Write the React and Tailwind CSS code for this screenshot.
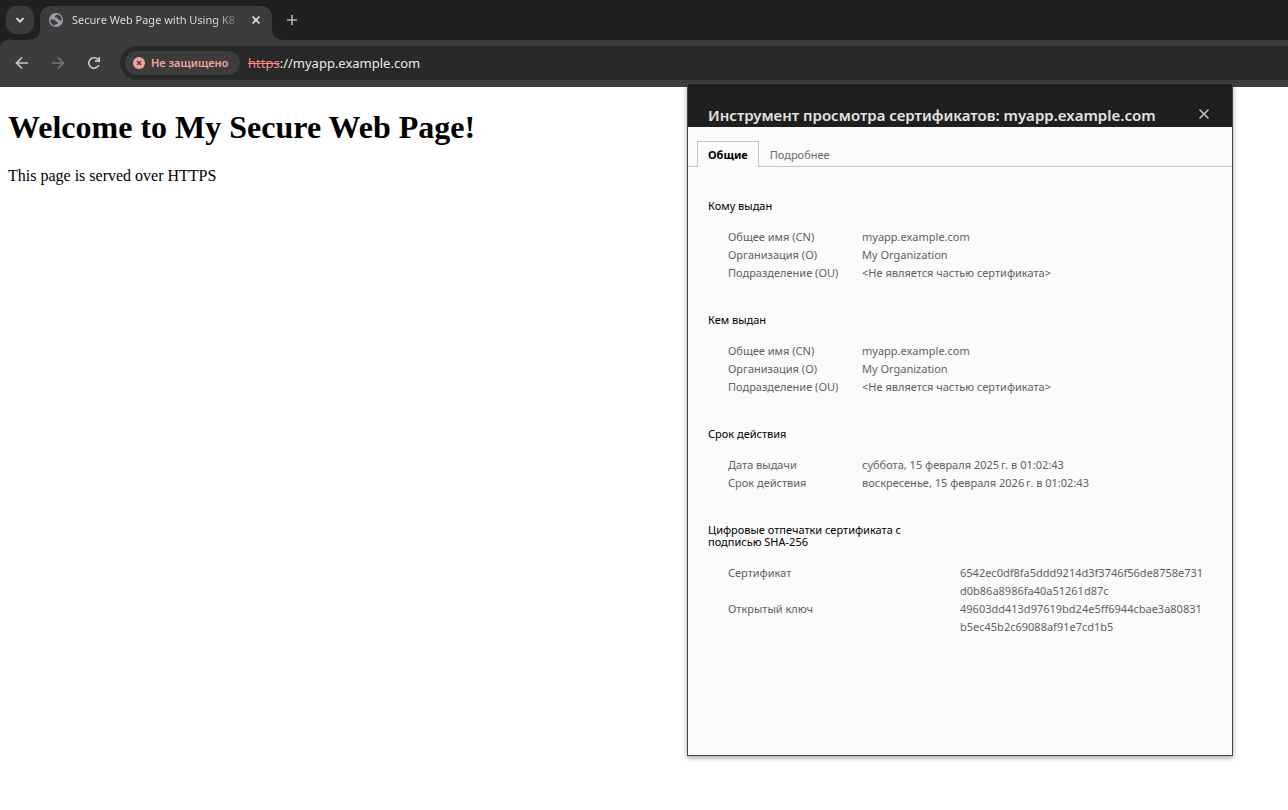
import { useState } from "react";

const NOT_PART = "<Не является частью сертификата>";

const subject = [
  ["Общее имя (CN)", "myapp.example.com"],
  ["Организация (O)", "My Organization"],
  ["Подразделение (OU)", NOT_PART],
];

const validity = [
  ["Дата выдачи", "суббота, 15 февраля 2025\u202fг. в 01:02:43"],
  ["Срок действия", "воскресенье, 15 февраля 2026\u202fг. в 01:02:43"],
];

const fingerprints = [
  ["Сертификат", "6542ec0df8fa5ddd9214d3f3746f56de8758e731", "d0b86a8986fa40a51261d87c"],
  ["Открытый ключ", "49603dd413d97619bd24e5ff6944cbae3a80831", "b5ec45b2c69088af91e7cd1b5"],
];

function Globe() {
  return (
    <svg className="size-4 shrink-0" viewBox="0 0 16 16" aria-hidden="true">
      <circle cx="8" cy="8" r="7" fill="#9aa0a8" />
      <path
        d="M9.6 2.6 7.6 3.2 6.6 4.4 7.2 5.4 9.2 5.6 9.4 7 11 7.4 11.6 8.6 13.6 8.4A5.700 5.700 0 0 0 9.600 2.600Z"
        fill="#3c3c3c"
      />
      <path
        d="M2.3 7.400 5.800 7.400 7.600 8.400 7.800 9.600 9.800 10.200 9.400 11.800 7.400 12.400 7 13.600A5.700 5.700 0 0 1 2.300 7.400Z"
        fill="#3c3c3c"
      />
    </svg>
  );
}

function TabStrip() {
  return (
    <div className="flex h-10 items-end bg-[#1f2020] pl-1.5">
      <button
        type="button"
        aria-label="Поиск вкладок"
        className="mb-1.5 flex size-7 items-center justify-center rounded-[10px] bg-[#3c3c3c] text-[#e3e3e3]"
      >
        <svg className="size-4" viewBox="0 0 16 16" fill="none" stroke="currentColor" strokeWidth="1.8" aria-hidden="true">
          <path d="M4.5 6.2 8 9.7 11.5 6.2" />
        </svg>
      </button>
      <svg className="-ml-1 h-2.5 w-2.5" viewBox="0 0 10 10" aria-hidden="true">
        <path d="M10 0V10H0A10 10 0 0 0 10 0Z" fill="#3c3c3c" />
      </svg>
      <div className="flex h-[34px] w-58 items-center rounded-t-[10px] bg-[#3c3c3c] px-2 pb-1.5">
        <Globe />
        <span className="ml-2 min-w-0 flex-1 bg-linear-to-r from-[#e3e3e3] from-85% to-[#555555] bg-clip-text text-[11px] leading-4 whitespace-nowrap text-transparent">
          Secure Web Page with Using K8
        </span>
        <button type="button" aria-label="Закрыть вкладку" className="ml-2 flex size-4 items-center justify-center text-[#e3e3e3]">
          <svg className="size-4" viewBox="0 0 16 16" stroke="currentColor" strokeWidth="1.6" aria-hidden="true">
            <path d="M4.5 4.5 11.5 11.5M11.5 4.5 4.5 11.5" />
          </svg>
        </button>
      </div>
      <svg className="h-2.5 w-2.5" viewBox="0 0 10 10" aria-hidden="true">
        <path d="M0 0V10H10A10 10 0 0 1 0 0Z" fill="#3c3c3c" />
      </svg>
      <button type="button" aria-label="Новая вкладка" className="mb-3 ml-0.5 flex size-4 items-center justify-center text-[#b4b4b4]">
        <svg className="size-4" viewBox="0 0 16 16" stroke="currentColor" strokeWidth="1.6" aria-hidden="true">
          <path d="M8 3V13M3 8H13" />
        </svg>
      </button>
    </div>
  );
}

function Toolbar() {
  return (
    <div className="bg-[#1f2020]">
      <div className="flex h-[47px] items-center rounded-tl-[8px] bg-[#3c3c3c] pb-px pl-3.5">
        <button type="button" aria-label="Назад" className="text-[#c7c7c7]">
          <svg className="size-4" viewBox="0 0 16 16" fill="none" stroke="currentColor" strokeWidth="1.7" aria-hidden="true">
            <path d="M14 8H3M8 2.5 2.5 8 8 13.5" />
          </svg>
        </button>
        <button type="button" aria-label="Вперёд" className="ml-5 text-[#757575]">
          <svg className="size-4" viewBox="0 0 16 16" fill="none" stroke="currentColor" strokeWidth="1.7" aria-hidden="true">
            <path d="M2 8H13M8 2.5 13.5 8 8 13.5" />
          </svg>
        </button>
        <button type="button" aria-label="Обновить" className="ml-5 text-[#c7c7c7]">
          <svg className="size-4" viewBox="0 0 16 16" fill="none" stroke="currentColor" strokeWidth="1.7" aria-hidden="true">
            <path d="M12.8 10A5.2 5.2 0 1 1 11.8 4.4L13 5.6" />
            <path d="M13.2 2V6.2H9" />
          </svg>
        </button>
        <div className="ml-[18px] flex h-[34px] flex-1 items-center rounded-l-full bg-[#282828] pl-[5px]">
          <button
            type="button"
            className="flex h-6 w-[115px] shrink-0 items-center gap-1.5 rounded-full bg-[#3c3c3c] pl-2 text-[11px] leading-4 font-semibold whitespace-nowrap text-[#f2a49c]"
          >
            <svg className="size-3 shrink-0" viewBox="0 0 12 12" aria-hidden="true">
              <circle cx="6" cy="6" r="6" fill="#f2a49c" />
              <path d="M4 4 8 8M8 4 4 8" stroke="#3c3c3c" strokeWidth="1.4" />
            </svg>
            Не защищено
          </button>
          <label htmlFor="address" className="ml-2 text-[13px] leading-5 text-[#f28b82] line-through">
            https
          </label>
          <input
            id="address"
            defaultValue="://myapp.example.com"
            aria-label="Адрес"
            className="min-w-0 flex-1 bg-transparent text-[13px] leading-5 text-[#e8e8e8] outline-none"
          />
        </div>
      </div>
    </div>
  );
}

function Section({ title, rows, wide }) {
  return (
    <section>
      <h3 className="w-54 text-[11px] leading-3 text-black">{title}</h3>
      <dl className="mt-4 ml-5 text-[11px] leading-[18px] text-[#5f5f5f]">
        {rows.map(([name, ...lines]) => (
          <div key={name} className="flex">
            <dt className={wide ? "w-58 shrink-0" : "w-[134px] shrink-0"}>{name}</dt>
            <dd className="whitespace-nowrap">
              {lines.map((line) => (
                <div key={line}>{line}</div>
              ))}
            </dd>
          </div>
        ))}
      </dl>
    </section>
  );
}

function CertificateDialog() {
  const [tab, setTab] = useState("general");
  const active = "-mb-px border border-b-0 border-[#c4c4c4] bg-[#fbfbfb] font-bold text-black";
  const idle = "-mb-px border border-b-0 border-transparent text-[#6a6a6a]";
  return (
    <div
      role="dialog"
      aria-labelledby="certificate-title"
      className="absolute top-[83px] right-[55px] w-[546px] border border-[#444444] bg-[#fbfbfb] shadow-[0_2px_5px_rgba(0,0,0,0.35)]"
    >
      <header className="flex h-[43px] items-end justify-between bg-[#1f1f1f] px-5 pb-px">
        <h2 id="certificate-title" className="text-[15px] leading-[22px] font-semibold whitespace-nowrap text-[#e3e3e3]">
          Инструмент просмотра сертификатов: myapp.example.com
        </h2>
        <button type="button" aria-label="Закрыть" className="mb-1 text-[#c7c7c7]">
          <svg className="size-4" viewBox="0 0 16 16" stroke="currentColor" strokeWidth="1.5" aria-hidden="true">
            <path d="M3.5 3.5 12.5 12.5M12.5 3.5 3.5 12.5" />
          </svg>
        </button>
      </header>
      <div role="tablist" className="flex h-10 items-end border-b border-[#c4c4c4] pl-[9px]">
        <button
          type="button"
          role="tab"
          aria-selected={tab === "general"}
          onClick={() => setTab("general")}
          className={`h-[26px] px-2.5 text-[11px] leading-4 ${tab === "general" ? active : idle}`}
        >
          Общие
        </button>
        <button
          type="button"
          role="tab"
          aria-selected={tab === "details"}
          onClick={() => setTab("details")}
          className={`h-[26px] px-2.5 text-[11px] leading-4 ${tab === "details" ? active : idle}`}
        >
          Подробнее
        </button>
      </div>
      <div role="tabpanel" className="flex flex-col gap-8 px-5 pt-[33px] pb-[119px]">
        <Section title="Кому выдан" rows={subject} />
        <Section title="Кем выдан" rows={subject} />
        <Section title="Срок действия" rows={validity} />
        <Section title="Цифровые отпечатки сертификата с подписью SHA-256" rows={fingerprints} wide />
      </div>
    </div>
  );
}

export default function App() {
  return (
    <div className="relative flex min-h-screen flex-col overflow-hidden bg-white font-['Noto_Sans','Open_Sans',sans-serif]">
      <TabStrip />
      <Toolbar />
      <main className="flex-1 px-2 pt-[22px] font-['Liberation_Serif',serif] text-black">
        <h1 className="text-[32px] leading-[37px] font-bold">Welcome to My Secure Web Page!</h1>
        <p className="mt-[21px] text-[16px] leading-[18px]">This page is served over HTTPS</p>
      </main>
      <CertificateDialog />
    </div>
  );
}
